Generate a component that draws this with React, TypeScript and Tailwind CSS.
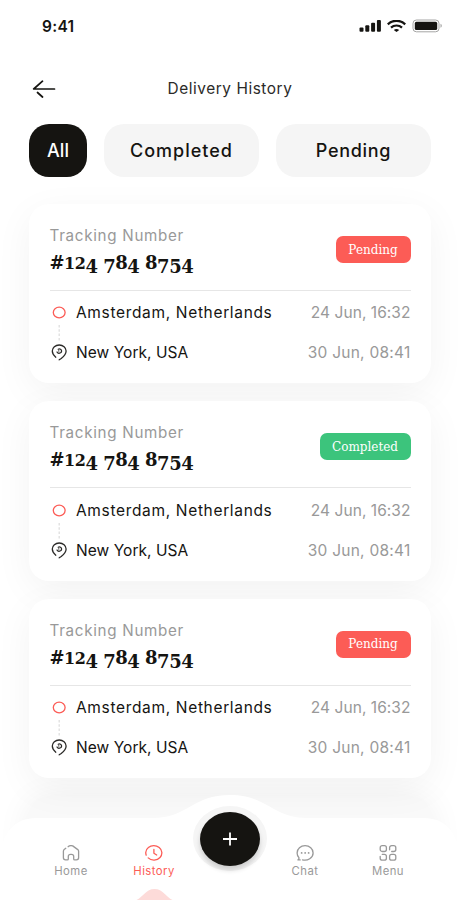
import clsx from "clsx";

type Status = "Pending" | "Completed";

const deliveries: { id: number; status: Status }[] = [
  { id: 1, status: "Pending" },
  { id: 2, status: "Completed" },
  { id: 3, status: "Pending" },
];

const sans = "font-['Inter','Liberation_Sans',sans-serif]";
const serif = "font-['DejaVu_Serif','Liberation_Serif',serif]";

function StatusBar() {
  return (
    <div className="flex h-[54px] items-center justify-between pr-[17px] pl-[42px] text-[#151411]">
      <span className="text-[15.5px] font-semibold tracking-[0.3px]">9:41</span>
      <div className="flex items-center gap-[6px] pb-[2px]">
        <svg width="22" height="12" viewBox="0 0 22 12" fill="currentColor">
          <rect x="0.5" y="7.6" width="4" height="4.2" rx="1" />
          <rect x="6.3" y="5.2" width="4" height="6.6" rx="1" />
          <rect x="12.1" y="2.7" width="4" height="9.1" rx="1" />
          <rect x="17.9" y="0" width="4" height="11.8" rx="1" />
        </svg>
        <svg width="19" height="12" viewBox="0 0 19 12" fill="none" stroke="currentColor">
          <path d="M.8 4.4C5.6-.4 13.4-.4 18.2 4.4" strokeWidth="2.3" />
          <path d="M4 7.6c3-2.8 8-2.8 11 0" strokeWidth="2.2" />
          <path d="M6.8 9.9c1.6-1.3 3.8-1.3 5.4 0L9.5 12z" fill="currentColor" stroke="none" />
        </svg>
        <svg width="31" height="14" viewBox="0 0 31 14" fill="none">
          <rect x="1" y="1" width="26" height="11.8" rx="3.4" stroke="#a5a5a4" />
          <rect x="2.8" y="2.8" width="22.4" height="8.2" rx="1.6" fill="#151411" />
          <path d="M28.5 4.8c1.8.7 1.8 3.3 0 4z" fill="#a5a5a4" />
        </svg>
      </div>
    </div>
  );
}

function Header() {
  return (
    <header className="relative flex h-[70px] items-center justify-center">
      <svg className="absolute left-[32px]" width="24" height="18" viewBox="0 0 24 18" fill="none" stroke="#151411" strokeWidth="1.7" strokeLinecap="round" strokeLinejoin="round">
        <path d="M10.5 1.2 1.7 9H22.5M5.5 12.5l5 4.5" />
      </svg>
      <h1 className="text-[15.4px] tracking-[0.55px] text-[#2b2a28]">Delivery History</h1>
    </header>
  );
}

function Tabs() {
  const base = "flex h-[53px] items-center justify-center rounded-[20px] text-[18px] font-medium";
  return (
    <div className="flex justify-between px-[29px]">
      <button className={clsx(base, "w-[58px] bg-[#151411] text-white")}>All</button>
      <button className={clsx(base, "w-[155px] bg-[#f5f5f5] tracking-[1px] text-[#151411]")}>Completed</button>
      <button className={clsx(base, "w-[155px] bg-[#f5f5f5] tracking-[0.7px] text-[#151411]")}>Pending</button>
    </div>
  );
}

const digitCls: Record<string, string> = {
  "1": "text-[16px]",
  "2": "text-[16px]",
  "4": "translate-y-[3.5px]",
  "5": "translate-y-[3.5px]",
  "7": "translate-y-[3.5px]",
};

/** Old-style figures: 1 and 2 sit at x-height, 4, 5 and 7 drop below the line. */
function TrackingNumber({ value }: { value: string }) {
  return (
    <p className={clsx(serif, "flex h-[28px] items-baseline text-[18px] leading-[31px] font-bold tracking-[-0.5px] whitespace-pre text-[#151411]")}>
      {value.split("").map((c, i) => (
        <span key={i} className={clsx("inline-block", digitCls[c])}>
          {c}
        </span>
      ))}
    </p>
  );
}

function DeliveryCard({ status }: { status: Status }) {
  return (
    <article className="relative z-10 h-[179.25px] rounded-[20px] bg-white px-[20.5px] pt-[20px] shadow-[0_10px_38px_rgba(0,0,0,0.05)]">
      <div className="flex h-[66px] justify-between">
        <div>
          <p className="text-[15.2px] leading-[23px] tracking-[0.7px] text-[#999]">Tracking Number</p>
          <TrackingNumber value="#124 784 8754" />
        </div>
        <span
          className={clsx(
            serif,
            "mt-[12px] flex h-[27px] items-center justify-center rounded-[7px] text-[12px] text-white",
            status === "Pending" ? "w-[75px] bg-[#fc5c56]" : "w-[91px] bg-[#3cc47c]",
          )}
        >
          {status}
        </span>
      </div>
      <div className="flex border-t-[1.5px] border-[#e6e6e6] pt-[12.3px]">
        <div className="flex w-[26.5px] flex-col items-start pt-[3px]">
          <svg width="18" height="56" viewBox="0 0 18 56" fill="none">
            <ellipse cx="9.2" cy="6.5" rx="5.9" ry="5.3" stroke="#fc5c56" strokeWidth="1.3" />
            <path d="M9.2 19v16" stroke="#dedede" strokeWidth="1.3" strokeDasharray="2.5 1.8" />
            <g stroke="#2b2a28" strokeWidth="1.3" strokeLinecap="round">
              <path d="M5.8 51.2C3.6 49.3 2.3 47.4 2.3 45c0-3.4 3.1-6 6.9-6s6.9 2.6 6.9 6c0 3.1-2.5 5.6-4.9 7.5l-2 1.3" />
              <path d="M7 46c.6 1.1 2.2 1.5 3.5.8 1.5-.9 1.4-2.8 0-3.6-.7-.4-1.6-.4-2.3 0M8.7 44.9h.1" />
            </g>
          </svg>
        </div>
        <div className="flex flex-1 flex-col gap-[20px] text-[15.5px] leading-[20px]">
          <div className="flex justify-between">
            <span className="tracking-[0.66px] text-[#151411]">Amsterdam, Netherlands</span>
            <span className="tracking-[0.05px] text-[#999]">24 Jun, 16:32</span>
          </div>
          <div className="flex justify-between">
            <span className="tracking-[0.05px] text-[#151411]">New York, USA</span>
            <span className="tracking-[0.25px] text-[#999]">30 Jun, 08:41</span>
          </div>
        </div>
      </div>
    </article>
  );
}

function HomeIcon() {
  return (
    <svg width="18" height="16" viewBox="0 0 18 16" fill="none" stroke="currentColor" strokeWidth="1.3" strokeLinecap="round" strokeLinejoin="round">
      <path d="M3.8 3.3 2.2 4.6c-.5.4-.8 1-.8 1.6v6.6c0 1.3.9 2.1 2.2 2.1h1.7c.7 0 1-.3 1-.9v-2.6c0-1.1.9-2 2.3-2h.8c1.4 0 2.3.9 2.3 2V14c0 .6.3.9 1 .9h1.7c1.3 0 2.2-.8 2.2-2.1V6.2c0-.6-.3-1.2-.8-1.6L10.7.9C9.6.4 8.4.4 7.3.9l-1.2.8" />
    </svg>
  );
}

function HistoryIcon() {
  return (
    <svg width="18" height="16" viewBox="0 0 18 16" fill="none" stroke="currentColor" strokeWidth="1.3" strokeLinecap="round" strokeLinejoin="round">
      <path d="M1.2 10.2C.3 7.4 1 4.3 3.4 2.5c3-2.4 7.6-2.5 10.8 0 3.2 2.5 3.5 7 .8 10-2.9 3.2-8.6 3.4-11.8.4" />
      <path d="M8.9 4.4v3.8l2.8 1.8" />
    </svg>
  );
}

function ChatIcon() {
  return (
    <svg width="18" height="16" viewBox="0 0 18 16" fill="none" stroke="currentColor" strokeWidth="1.3" strokeLinecap="round" strokeLinejoin="round">
      <path d="M6.5 14.8c5.2 1.3 10.6-2 10.6-6.9 0-4-3.6-7.2-8-7.2S1.1 3.9 1.1 7.9c0 1.9.7 3.4 1.8 4.8.2.7-.1 1.5-1 2.2h2.3" />
      <path d="M5.6 7.9h.1M9.1 7.9h.1M12.6 7.9h.1" strokeWidth="1.7" />
    </svg>
  );
}

function MenuIcon() {
  return (
    <svg width="18" height="16" viewBox="0 0 18 16" fill="none" stroke="currentColor" strokeWidth="1.3" strokeLinecap="round" strokeLinejoin="round">
      <rect x="1.2" y=".7" width="6.2" height="5.8" rx="2" />
      <path d="M10.6 4.8V2.7c0-1.2.9-2 2.1-2h2c1.2 0 2.1.8 2.1 2v1.8c0 1.2-.9 2-2.1 2h-2" />
      <rect x="10.6" y="9.4" width="6.2" height="5.8" rx="2" />
      <path d="M1.2 11.4v1.8c0 1.2.9 2 2.1 2h2c1.2 0 2.1-.8 2.1-2v-1.8c0-1.2-.9-2-2.1-2h-2" />
    </svg>
  );
}

const navItems = [
  { label: "Home", icon: <HomeIcon /> },
  { label: "History", icon: <HistoryIcon />, active: true },
  null,
  { label: "Chat", icon: <ChatIcon /> },
  { label: "Menu", icon: <MenuIcon /> },
];

function BottomNav() {
  return (
    <nav className="absolute inset-x-0 bottom-0 z-20 h-[106px]">
      <svg className="absolute inset-0" width="460" height="106" viewBox="0 0 460 106" fill="none">
        <path d="M0 106V62C3 38 15 24 36 24H153C187 24 193 1 230 1s43 23 77 23H424C445 24 457 38 460 62V106Z" fill="#fff" />
        <path d="M136.5 106C143 103 146 95 154.5 95S166 103 172.5 106Z" fill="#fddbd9" />
      </svg>
      <div className="relative flex px-[29.5px] pt-[51px]">
        {navItems.map((item, i) =>
          item ? (
            <a
              key={item.label}
              className={clsx(
                "flex w-[83px] flex-col items-center gap-[3.5px] text-[11.3px] leading-[13px] tracking-[0.45px]",
                item.active ? "text-[#fc5c56]" : "text-[#999]",
                i === 3 && "-ml-[15px]",
              )}
            >
              {item.icon}
              {item.label}
            </a>
          ) : (
            <span key="gap" className="w-[83px]" />
          ),
        )}
      </div>
      <button className="absolute top-[12px] left-[193px] flex h-[65px] w-[74px] items-center justify-center rounded-[50%] bg-[#f5f5f5]">
        <span className="flex h-[54px] w-[60px] items-center justify-center rounded-[50%] bg-[#151411] shadow-[0_4px_5px_rgba(0,0,0,0.16)]">
          <svg width="16" height="14" viewBox="0 0 16 14" stroke="#fff" strokeWidth="1.8">
            <path d="M8 .5v13M1 7h14" />
          </svg>
        </span>
      </button>
    </nav>
  );
}

export default function App() {
  return (
    <div className={clsx(sans, "relative isolate h-[900px] w-[460px] overflow-hidden bg-white")}>
      <StatusBar />
      <Header />
      <Tabs />
      <main className="mt-[27px] flex flex-col gap-[18px] px-[29px]">
        {deliveries.map((d) => (
          <DeliveryCard key={d.id} status={d.status} />
        ))}
        <div className="h-[179px] rounded-[20px] bg-[#f9f9f9] shadow-[0_4px_34px_rgba(0,0,0,0.07)]" />
      </main>
      <BottomNav />
    </div>
  );
}
